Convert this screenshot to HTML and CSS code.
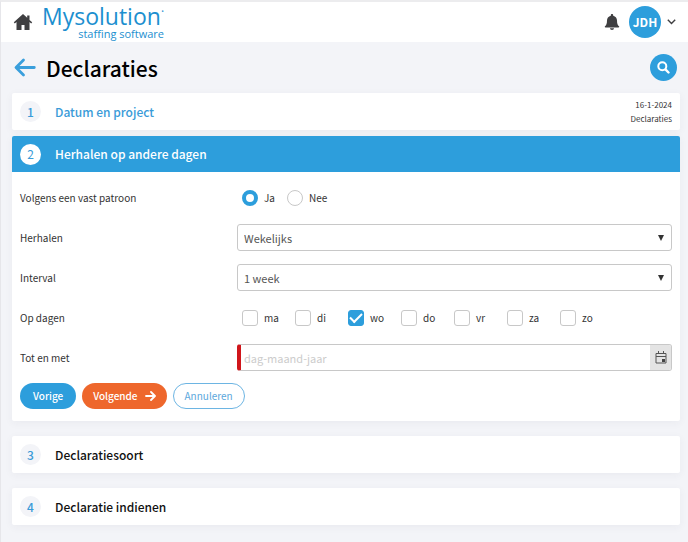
FILE: index.html
```html
<!DOCTYPE html>
<html lang="nl">
<head>
<meta charset="utf-8">
<meta name="viewport" content="width=device-width, initial-scale=1">
<title>Declaraties</title>
<link rel="stylesheet" href="styles.css">
</head>
<body>
<header class="topbar">
  <a class="home" href="#" aria-label="Home">
    <svg width="20" height="18" viewBox="0 0 20 18"><path fill="#3f3f41" d="M10 1 .8 9.300l1 1.100L3.500 9v8h5v-5h3v5h5V9l1.700 1.400 1-1.100-2.700-2.400V2.500h-2.300v2.300z"/></svg>
  </a>
  <a class="logo" href="#"><span class="logo-name">Mysolution<span class="logo-mark">·</span></span><span class="logo-sub">staffing software</span></a>
  <button class="plain bell" type="button" aria-label="Meldingen">
    <svg width="16" height="18" viewBox="0 0 16 18"><path fill="#3f3f41" d="M8 1c.7 0 1.200.5 1.200 1.200v.5C11.700 3.300 13 5.200 13 7.500c0 3.500.8 4.800 2 5.800.4.400.2 1.200-.5 1.200h-13c-.7 0-.9-.8-.5-1.200 1.200-1 2-2.300 2-5.800 0-2.300 1.300-4.200 3.800-4.800v-.5C6.800 1.500 7.300 1 8 1zM6 15.300h4c0 1-.9 1.700-2 1.700s-2-.7-2-1.700z"/></svg>
  </button>
  <button class="plain account" type="button">
    <span class="avatar">JDH</span>
    <svg width="9" height="6" viewBox="0 0 9 6"><path fill="none" stroke="#3f3f41" stroke-width="1.400" d="m.8.8 3.700 3.700L8.200.8"/></svg>
  </button>
</header>
<main class="page">
  <div class="title-row">
    <a class="back" href="#" aria-label="Terug">
      <svg width="22" height="20" viewBox="0 0 22 20"><path fill="none" stroke="#3a9fdc" stroke-width="2.800" stroke-linecap="round" stroke-linejoin="round" d="M9.500 2 2 9.500l7.500 7.500M2.500 9.500h17.800"/></svg>
    </a>
    <h1>Declaraties</h1>
    <button class="plain search" type="button" aria-label="Zoeken">
      <svg width="13" height="13" viewBox="0 0 13 13"><circle cx="5.300" cy="5.300" r="4" fill="none" stroke="#fff" stroke-width="2"/><path stroke="#fff" stroke-width="2.400" stroke-linecap="round" d="m8.700 8.700 2.800 2.800"/></svg>
    </button>
  </div>

  <section class="card done">
    <h2 class="step"><span class="num">1</span>Datum en project</h2>
    <div class="summary"><span>16-1-2024</span><span>Declaraties</span></div>
  </section>

  <section class="card active">
    <h2 class="step"><span class="num">2</span>Herhalen op andere dagen</h2>
    <form class="form">
      <div class="row" role="radiogroup" aria-labelledby="pattern">
        <span id="pattern">Volgens een vast patroon</span>
        <div class="options radios">
          <label><input type="radio" name="pattern" checked>Ja</label>
          <label><input type="radio" name="pattern">Nee</label>
        </div>
      </div>
      <div class="row">
        <label for="repeat">Herhalen</label>
        <div class="select"><select id="repeat"><option>Wekelijks</option></select></div>
      </div>
      <div class="row">
        <label for="interval">Interval</label>
        <div class="select"><select id="interval"><option>1 week</option></select></div>
      </div>
      <div class="row" role="group" aria-labelledby="days">
        <span id="days">Op dagen</span>
        <div class="options days">
          <label><input type="checkbox">ma</label>
          <label><input type="checkbox">di</label>
          <label><input type="checkbox" checked>wo</label>
          <label><input type="checkbox">do</label>
          <label><input type="checkbox">vr</label>
          <label><input type="checkbox">za</label>
          <label><input type="checkbox">zo</label>
        </div>
      </div>
      <div class="row">
        <label for="until">Tot en met</label>
        <div class="date">
          <input id="until" type="text" placeholder="dag-maand-jaar" required>
          <button class="plain pick" type="button" aria-label="Kalender">
            <svg width="12" height="13" viewBox="0 0 12 13"><path fill="none" stroke="#555" d="M1 2.500h10v9.500H1zM1 5.500h10M3.500 0v3M8.500 0v3"/><path fill="#444" d="M7 8h3v3H7z"/></svg>
          </button>
        </div>
      </div>
      <div class="actions">
        <button class="btn primary" type="button">Vorige</button>
        <button class="btn next" type="submit">Volgende
          <svg width="11" height="10" viewBox="0 0 11 10"><path fill="none" stroke="#fff" stroke-width="1.800" stroke-linecap="round" stroke-linejoin="round" d="M6 1l4 4-4 4M1 5h8.500"/></svg>
        </button>
        <button class="btn outline" type="button">Annuleren</button>
      </div>
    </form>
  </section>

  <section class="card todo">
    <h2 class="step"><span class="num">3</span>Declaratiesoort</h2>
  </section>
  <section class="card todo">
    <h2 class="step"><span class="num">4</span>Declaratie indienen</h2>
  </section>
</main>
</body>
</html>
```
FILE: styles.css
```css
:root {
  --blue: #2d9edc;
  --line: #c8c8c8;
  --page: #f3f4f8;
}
* { box-sizing: border-box; }
body {
  margin: 0;
  min-height: 100vh;
  border-top: 2px solid #ececee;
  border-left: 1px solid #e6e6ea;
  background: var(--page);
  color: #333;
  font: 11px/16px "Noto Sans CJK SC", "Open Sans", sans-serif;
}
svg { display: block; flex: none; }
a { color: inherit; text-decoration: none; }
h1, h2 { margin: 0; }
button, input, select { font: inherit; color: inherit; }
.plain { border: 0; padding: 0; background: none; cursor: pointer; }

.topbar {
  display: flex;
  align-items: center;
  height: 40px;
  padding: 0 12px;
  background: #fff;
}
.logo {
  display: flex;
  flex-direction: column;
  margin-left: 9px;
  margin-right: auto;
  color: #1c8fcf;
  font-family: "Open Sans", sans-serif;
}
.logo-name { font-size: 23px; line-height: 24px; }
.logo-mark { font-size: 12px; vertical-align: top; line-height: 16px; }
.logo-sub { align-self: flex-end; font-size: 11px; line-height: 12px; }
.account { display: flex; align-items: center; gap: 6px; margin-left: 9px; }
.avatar {
  display: grid;
  place-items: center;
  width: 32px;
  height: 32px;
  border-radius: 50%;
  background: var(--blue);
  color: #fff;
  font-size: 12px;
  font-weight: 700;
}

.page { padding: 0 8px 16px 11px; }
.title-row { display: flex; align-items: center; height: 51px; padding: 0 3px 0 2px; }
h1 { margin-left: 10px; color: #000; font-size: 21px; line-height: 32px; font-weight: 500; }
.search {
  display: grid;
  place-items: center;
  width: 27px;
  height: 27px;
  margin-left: auto;
  border-radius: 50%;
  background: var(--blue);
}

.card { border-radius: 2px; background: #fff; box-shadow: 0 2px 8px rgba(60, 60, 80, .05); }
.step {
  display: flex;
  align-items: center;
  gap: 14px;
  height: 37px;
  padding: 0 8px;
  font-size: 12px;
  font-weight: 500;
}
.num {
  display: grid;
  place-items: center;
  width: 21px;
  height: 21px;
  border-radius: 50%;
  background: var(--page);
  color: #3a9bd8;
}
.done { display: flex; justify-content: space-between; align-items: center; margin-bottom: 6px; color: #3a9bd8; }
.summary {
  display: flex;
  flex-direction: column;
  padding-right: 8px;
  color: #333;
  font-size: 8px;
  line-height: 14px;
  text-align: right;
}
.active .step { height: 36px; border-radius: 2px 2px 0 0; background: var(--blue); color: #fff; }
.active .num { background: #fff; font-weight: 400; }
.todo { margin-top: 15px; color: #111; }

.form { display: flex; flex-direction: column; gap: 13px; padding: 12px 8px; }
.row { display: grid; grid-template-columns: 217px 1fr; align-items: center; height: 27px; font-size: 10px; }
.options { display: flex; padding-left: 5px; }
.options label { display: flex; align-items: center; gap: 6px; }
.radios { gap: 12px; }
.days label { width: 53px; }
.options input { appearance: none; width: 16px; height: 16px; margin: 0; border: 1px solid var(--line); background: #fff; }
.options input[type="radio"] { border-radius: 50%; }
.options input[type="radio"]:checked { border: 4px solid var(--blue); }
.options input[type="checkbox"] { display: grid; place-items: center; border-radius: 3px; }
.options input[type="checkbox"]:checked { border-color: var(--blue); background: var(--blue); }
.options input[type="checkbox"]:checked::before {
  content: "";
  width: 10px;
  height: 5px;
  margin-bottom: 3px;
  border: solid #fff;
  border-width: 0 0 2px 2px;
  transform: rotate(-45deg);
}
.select, .date { height: 27px; border: 1px solid var(--line); border-radius: 3px; color: #555; font-size: 11px; }
.select { display: grid; align-items: center; }
.select::after {
  content: "";
  grid-area: 1 / 1;
  justify-self: end;
  margin-right: 7px;
  border: solid transparent;
  border-width: 6px 3px 0;
  border-top-color: #333;
  pointer-events: none;
}
.select select { grid-area: 1 / 1; appearance: none; width: 100%; height: 25px; padding: 0 6px; border: 0; background: none; }
.date { display: flex; overflow: hidden; border-left: 4px solid #d0161b; }
.date input { flex: 1; min-width: 0; padding: 0 3px; border: 0; background: #fff; }
.date input::placeholder { color: #ccc; }
.pick { display: grid; place-items: center; width: 21px; background: #e4e4e4; }

.actions { display: flex; gap: 6px; margin-top: -1px; }
.btn {
  display: flex;
  align-items: center;
  gap: 7px;
  height: 26px;
  padding: 0 12px;
  border: 1px solid transparent;
  border-radius: 13px;
  color: #fff;
  font-size: 10px;
  font-weight: 500;
  cursor: pointer;
}
.primary { background: var(--blue); }
.next { padding: 0 10px; background: #ee672c; }
.outline { padding: 0 11px; border-color: #6db5e3; background: #fff; color: #5ba7dc; font-weight: 400; }
```
